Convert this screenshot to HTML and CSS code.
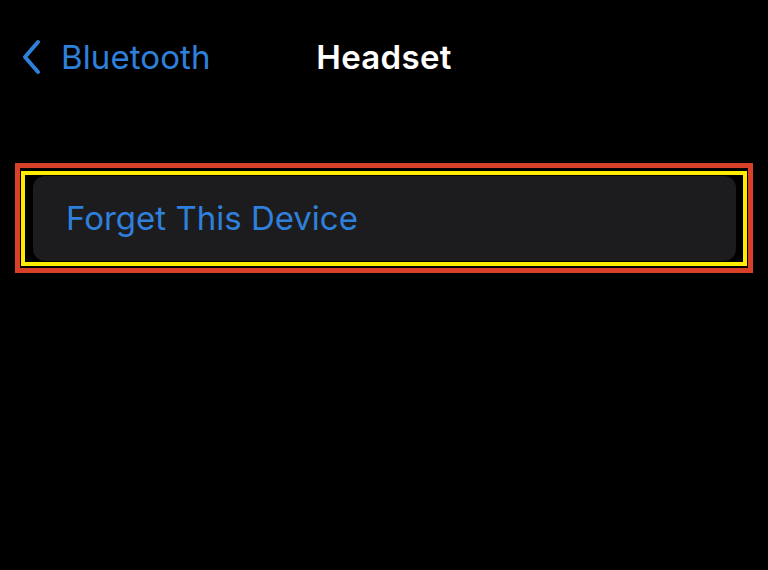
FILE: index.html
```html
<!DOCTYPE html>
<html lang="en">
<head>
    <meta charset="UTF-8">
    <meta name="viewport" content="width=device-width, initial-scale=1.0">
    <title>Headset</title>
    <link rel="stylesheet" href="styles.css">
</head>
<body>
    <div class="screen">
        <div class="nav-bar">
            <a class="back-link" href="#">
                <svg class="back-chevron" width="22" height="36" viewBox="0 0 22 36">
                    <path d="M18 3 L5 18 L18 33" fill="none" stroke="currentColor" stroke-width="4" stroke-linecap="round" stroke-linejoin="round"/>
                </svg>
                <span>Bluetooth</span>
            </a>
            <div class="nav-title">Headset</div>
            <div></div>
        </div>

        <div class="highlight-red">
            <div class="highlight-yellow">
                <div class="settings-group">
                    <a class="settings-row" href="#">Forget This Device</a>
                </div>
            </div>
        </div>
    </div>
</body>
</html>
```

FILE: styles.css
```css
/* Base */
* {
    margin: 0;
    padding: 0;
    box-sizing: border-box;
}

body {
    background: #000;
    font-family: 'Inter', 'Noto Sans', sans-serif;
    width: 768px;
    height: 570px;
    overflow: hidden;
}

.screen {
    display: flex;
    flex-direction: column;
    padding: 37px 15px 0 15px;
}

/* Navigation bar */
.nav-bar {
    display: grid;
    grid-template-columns: 1fr auto 1fr;
    align-items: center;
    height: 40px;
}

.back-link {
    display: flex;
    align-items: center;
    gap: 19px;
    padding-left: 5px;
    color: #2f80dc;
    text-decoration: none;
    font-size: 33px;
    letter-spacing: 0.1px;
}

.back-chevron {
    flex-shrink: 0;
}

.nav-title {
    color: #fff;
    font-size: 33px;
    font-weight: 600;
    letter-spacing: 0.3px;
}

/* Annotation boxes */
.highlight-red {
    margin-top: 86px;
    height: 110px;
    border: 5px solid #d8402a;
    padding: 3px 1px 2px 1px;
}

.highlight-yellow {
    height: 100%;
    border: 4px solid #ffec00;
    padding: 1px 7px 1px 8px;
}

/* Settings card */
.settings-group {
    height: 100%;
    background: #1c1c1e;
    border-radius: 12px;
    display: flex;
    align-items: center;
}

.settings-row {
    padding-left: 33px;
    padding-bottom: 2px;
    color: #2f80dc;
    text-decoration: none;
    font-size: 33px;
}
```
